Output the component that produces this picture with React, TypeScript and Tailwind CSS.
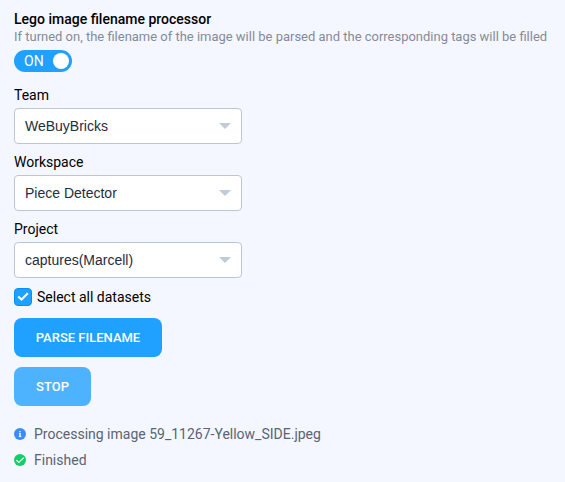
import { useState } from "react";

function Select({ label, value }: { label: string; value: string }) {
  return (
    <div className="h-[67px]">
      <div className="h-[22px] text-[14px] leading-[18px] text-black">{label}</div>
      <button className="flex h-9 w-[228px] items-center justify-between rounded-[4px] border border-[#bfc5d9] bg-white pl-[10px] pr-[10px] font-['Liberation_Sans',sans-serif] text-[14px] text-[#1f2d3d]">
        <span>{value}</span>
        <svg width="12" height="6" viewBox="0 0 12 6" fill="#bfcbd9">
          <path d="M0 0h12L6 6z" />
        </svg>
      </button>
    </div>
  );
}

function InfoIcon() {
  return (
    <svg width="12" height="12" viewBox="0 0 12 12">
      <circle cx="6" cy="6" r="6" fill="#3b8cff" />
      <path d="M5.3 2.9h1.4v1.3H5.3zM5 5.1h1.7v3h.5v.9H4.9v-.9h.5V6H5z" fill="#fff" />
    </svg>
  );
}

function SuccessIcon() {
  return (
    <svg width="12" height="12" viewBox="0 0 12 12">
      <circle cx="6" cy="6" r="6" fill="#13ce66" />
      <path d="M2.4 6.1 4.8 8.4l4.8-4.6" fill="none" stroke="#fff" strokeWidth="1.2" />
    </svg>
  );
}

export default function App() {
  const [enabled, setEnabled] = useState(true);
  const [selected, setSelected] = useState(true);
  return (
    <main className="h-[482px] w-[565px] overflow-hidden bg-[#f4f7ff] px-[14px] pt-[9px] font-[Roboto,sans-serif] text-[14px]">
      <h1 className="h-[19px] text-[14px] font-medium leading-[20px] text-black">Lego image filename processor</h1>
      <p className="h-[22px] whitespace-nowrap text-[12.98px] leading-[18px] text-[#868b98]">
        If turned on, the filename of the image will be parsed and the corresponding tags will be filled
      </p>
      <button
        onClick={() => setEnabled(!enabled)}
        className="flex h-[22px] w-[58px] items-center justify-between rounded-full bg-[#20a0ff] pl-[10px] pr-[3px] text-[14px] text-white"
      >
        <span>{enabled ? "ON" : "OFF"}</span>
        <span className="size-4 rounded-full bg-white" />
      </button>

      <div className="mt-[14px]">
        <Select label="Team" value="WeBuyBricks" />
        <Select label="Workspace" value="Piece Detector" />
        <Select label="Project" value="captures(Marcell)" />
      </div>

      <button onClick={() => setSelected(!selected)} className="mt-px flex h-[18px] items-center gap-[5px] text-black">
        <span className="flex size-[18px] items-center justify-center rounded-[4px] border border-[#0190fe] bg-[#20a0ff]">
          {selected && (
            <svg width="12" height="10" viewBox="0 0 12 10" fill="none" stroke="#fff" strokeWidth="2">
              <path d="M1.2 4.4 4.5 7.5 10.8 1.3" />
            </svg>
          )}
        </span>
        <span>Select all datasets</span>
      </button>

      <button className="mt-3 flex h-[39px] w-[148px] items-center justify-center rounded-[8px] bg-[#20a0ff] text-[13px] font-medium text-white">
        PARSE FILENAME
      </button>
      <button className="mt-[10px] flex h-[39px] w-[77px] items-center justify-center rounded-[8px] bg-[#4db3ff] text-[13px] font-medium text-white">
        STOP
      </button>

      <div className="mt-[18px] text-[#5a6473]">
        <div className="flex h-[20px] items-center gap-2">
          <InfoIcon />
          <span>Processing image 59_11267-Yellow_SIDE.jpeg</span>
        </div>
        <div className="mt-[6px] flex h-[20px] items-center gap-2">
          <SuccessIcon />
          <span>Finished</span>
        </div>
      </div>
    </main>
  );
}
